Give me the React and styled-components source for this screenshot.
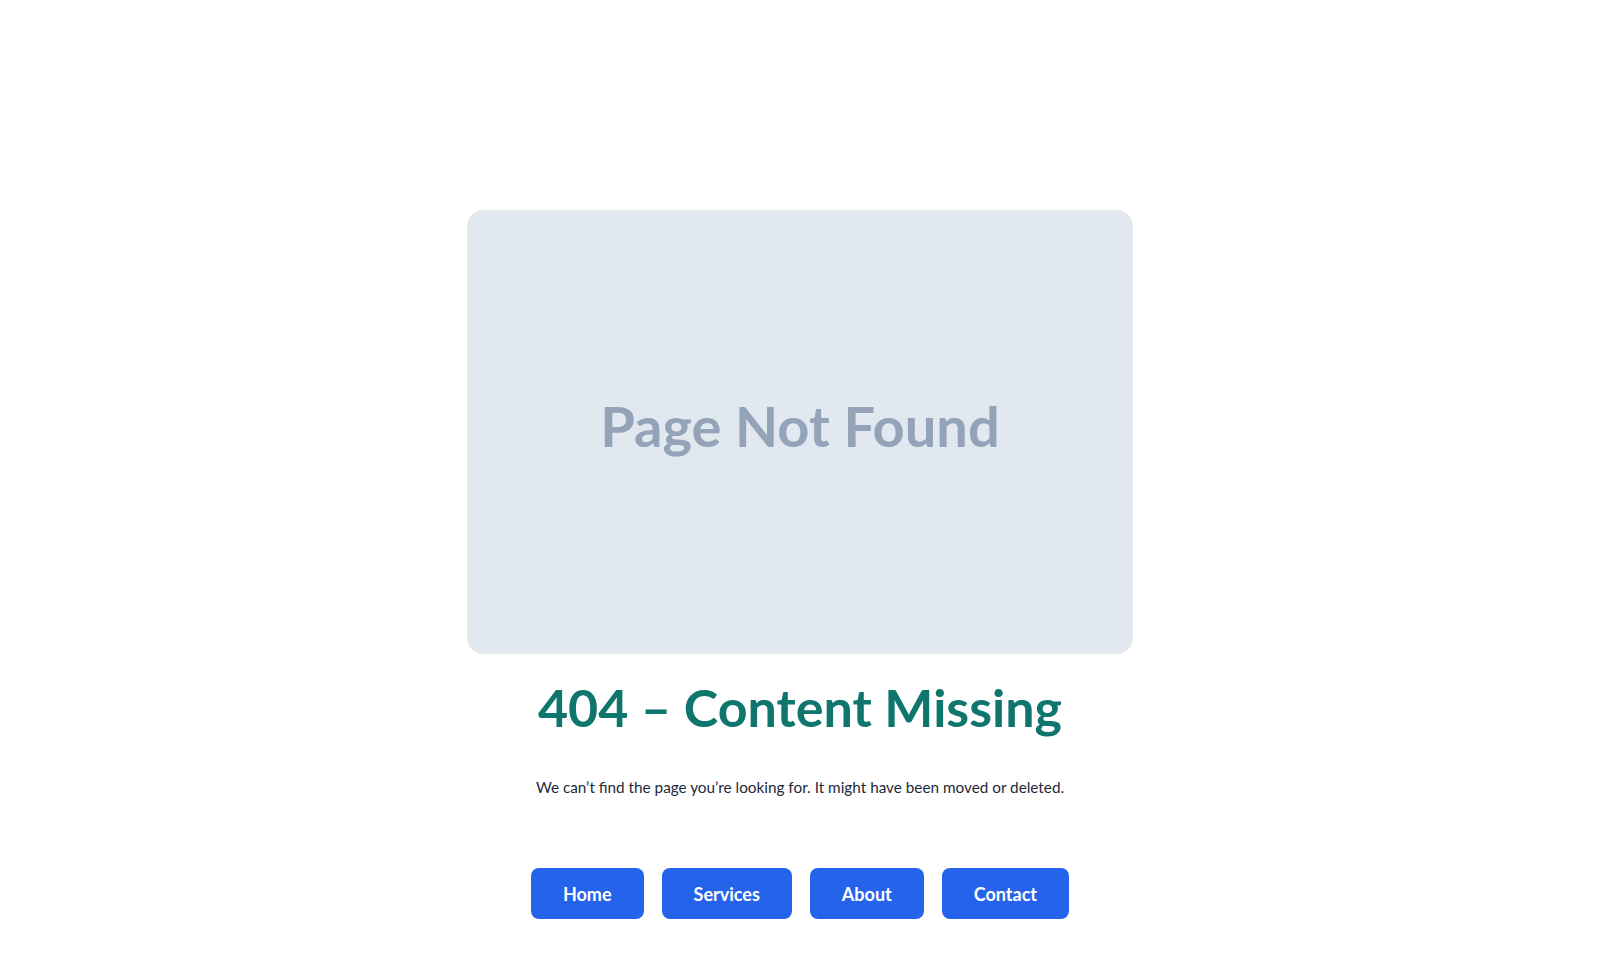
import React from "react";
import styled, { createGlobalStyle } from "styled-components";

const Global = createGlobalStyle`
  html, body { margin: 0; padding: 0; background: #ffffff; }
  body { font-family: "Lato", "Noto Sans", sans-serif; }
  * { box-sizing: border-box; }
`;

const Page = styled.main`
  min-height: 978px;
  display: flex;
  flex-direction: column;
  align-items: center;
  padding-top: 210px;
`;

const Illustration = styled.div`
  width: 666px;
  height: 444px;
  border-radius: 16px;
  background: #e2e8f0;
  display: flex;
  align-items: center;
  justify-content: center;
  padding-bottom: 12px;
`;

const IllustrationText = styled.span`
  font-family: "Lato", sans-serif;
  font-weight: 700;
  font-size: 56px;
  color: #94a3b8;
  line-height: 1;
`;

const Title = styled.h1`
  margin: 22px 0 0;
  font-family: "Lato", sans-serif;
  font-weight: 700;
  font-size: 52px;
  line-height: 1.2;
  color: #0f766e;
`;

const Message = styled.p`
  margin: 38px 0 0;
  font-family: "Lato", sans-serif;
  font-size: 15.3px;
  line-height: 1.5;
  color: #1e293b;
`;

const Nav = styled.nav`
  margin-top: 69px;
  display: flex;
  gap: 18px;
`;

const NavButton = styled.a`
  display: inline-flex;
  align-items: center;
  justify-content: center;
  height: 51px;
  padding: 0 32px;
  border-radius: 8px;
  background: #2563eb;
  color: #ffffff;
  font-family: "Lato", sans-serif;
  font-weight: 700;
  font-size: 18px;
  text-decoration: none;
`;

const links = ["Home", "Services", "About", "Contact"];

export default function App() {
  return (
    <>
      <Global />
      <Page>
        <Illustration>
          <IllustrationText>Page Not Found</IllustrationText>
        </Illustration>
        <Title>404 – Content Missing</Title>
        <Message>
          We can’t find the page you’re looking for. It might have been moved or deleted.
        </Message>
        <Nav>
          {links.map((l) => (
            <NavButton key={l} href="#">
              {l}
            </NavButton>
          ))}
        </Nav>
      </Page>
    </>
  );
}
